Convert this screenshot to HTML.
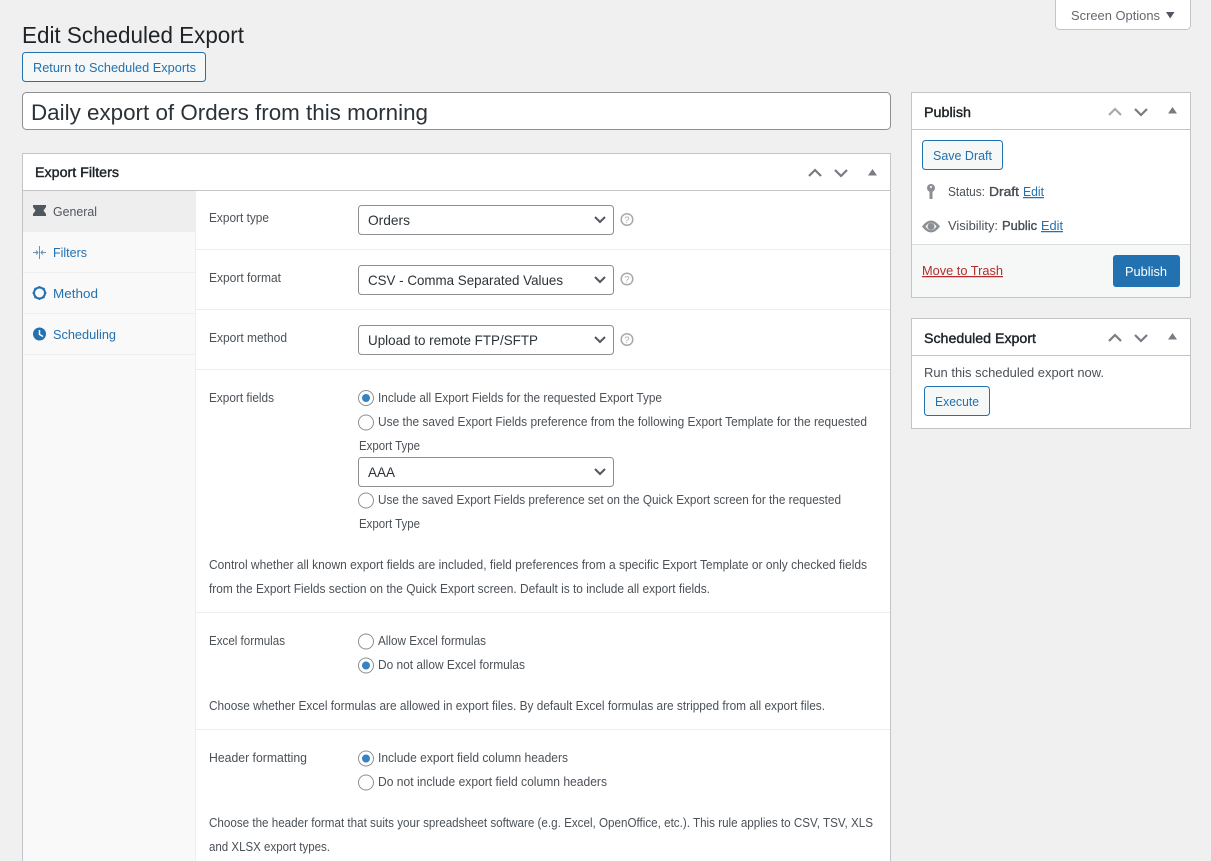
<!DOCTYPE html>
<html><head><meta charset="utf-8"><title>Edit Scheduled Export</title>
<style>
html,body{margin:0;padding:0;background:#f0f0f1;overflow:hidden}
svg{display:block}
text{font-family:"Liberation Sans",sans-serif;font-size:12.5px;fill:#4b5157}
.b{fill:#3c434a;stroke:#3c434a;stroke-width:.35px}
.h{font-size:13.5px;fill:#1d2327;stroke:#1d2327;stroke-width:.4px}
.s{font-size:14px;fill:#2c3338}
.l{fill:#2271b1;font-size:12.5px}
.n{font-size:12.5px;fill:#4b5157}
.ln{stroke:#eee;stroke-width:1}
.box{fill:#fff;stroke:#c3c4c7;stroke-width:1}
.sel{fill:#fff;stroke:#8c8f94;stroke-width:1}
.chev{fill:none;stroke:#50575e;stroke-width:2}
.ctl{fill:none;stroke:#787c82;stroke-width:2.200}
.r{fill:#fff;stroke:#8c8f94;stroke-width:1}
.btn{fill:#f6f7f7;stroke:#2271b1;stroke-width:1}
.hc{fill:none;stroke:#a7aaad;stroke-width:1.500}
.hq{font-size:9.500px;fill:#a7aaad}
</style></head><body>
<svg width="1211" height="861" viewBox="0 0 1211 861" xmlns="http://www.w3.org/2000/svg">
<rect width="1211" height="861" fill="#f0f0f1"/>

<!-- Screen options -->
<path d="M1055.500 -2V25.500a4 4 0 0 0 4 4H1186.500a4 4 0 0 0 4-4V-2Z" class="box"/>
<text x="1071" y="20" textLength="89" lengthAdjust="spacingAndGlyphs" class="n" style="fill:#646970">Screen Options</text>
<path d="M1166 12H1174.500L1170.200 18.500Z" fill="#50575e"/>

<!-- Heading -->
<text x="22" y="43" textLength="222" lengthAdjust="spacingAndGlyphs" style="font-size:23px;fill:#1d2327">Edit Scheduled Export</text>
<rect x="22.500" y="52.500" width="183" height="29" rx="3" class="btn"/>
<text x="33" y="72" textLength="163" lengthAdjust="spacingAndGlyphs" class="l">Return to Scheduled Exports</text>

<!-- Title input -->
<rect x="22.500" y="92.500" width="868" height="37" rx="4" class="sel"/>
<text x="31" y="120" textLength="397" lengthAdjust="spacingAndGlyphs" style="font-size:22.500px;fill:#2c3338">Daily export of Orders from this morning</text>

<!-- Main box -->
<rect x="22.500" y="153.500" width="868" height="720" class="box"/>
<line x1="23" x2="890" y1="190.500" y2="190.500" stroke="#c3c4c7"/>
<text x="35" y="177" textLength="84" lengthAdjust="spacingAndGlyphs" class="h">Export Filters</text>
<path d="M809 176L815 170L821 176" class="ctl"/>
<path d="M835 170L841 176L847 170" class="ctl"/>
<path d="M868 175.500L872.500 169L877 175.500Z" fill="#787c82"/>

<!-- Sidebar -->
<rect x="23" y="191" width="172" height="670" fill="#f9f9f9"/>
<rect x="23" y="191" width="172" height="41" fill="#eeeeee"/>
<line x1="195.500" x2="195.500" y1="191" y2="861" stroke="#eee"/>
<line x1="23" x2="195" y1="272.500" y2="272.500" class="ln"/>
<line x1="23" x2="195" y1="313.500" y2="313.500" class="ln"/>
<line x1="23" x2="195" y1="354.500" y2="354.500" class="ln"/>

<path d="M33 205H46V207L43.500 210.500L46 214V216H33V214L35.500 210.500L33 207Z" fill="#50575e"/>
<text x="53" y="216" textLength="44" lengthAdjust="spacingAndGlyphs" class="n" style="fill:#50575e">General</text>
<path d="M39.500 246V259M33 252.500H38M36 250.500L38 252.500L36 254.500M46 252.500H41M43 250.500L41 252.500L43 254.500" fill="none" stroke="#6d8fb3" stroke-width="1"/>
<text x="53" y="257" textLength="34" lengthAdjust="spacingAndGlyphs" class="l">Filters</text>
<circle cx="39.500" cy="293" r="5.500" fill="none" stroke="#2271b1" stroke-width="2"/>
<path d="M39.500 286V288M39.500 298V300M32.500 293H34.500M44.500 293H46.500M34.500 288L36 289.500M44.500 288L43 289.500M34.500 298L36 296.500M44.500 298L43 296.500" stroke="#2271b1" stroke-width="1.500"/>
<text x="53" y="298" textLength="45" lengthAdjust="spacingAndGlyphs" class="l">Method</text>
<circle cx="39.500" cy="334" r="6.500" fill="#2271b1"/>
<path d="M39.500 330V334.500L43 336.500" fill="none" stroke="#fff" stroke-width="1.500"/>
<text x="53" y="339" textLength="63" lengthAdjust="spacingAndGlyphs" class="l">Scheduling</text>

<!-- Row lines -->
<line x1="196" x2="890" y1="249.500" y2="249.500" class="ln"/>
<line x1="196" x2="890" y1="309.500" y2="309.500" class="ln"/>
<line x1="196" x2="890" y1="369.500" y2="369.500" class="ln"/>
<line x1="196" x2="890" y1="612.500" y2="612.500" class="ln"/>
<line x1="196" x2="890" y1="729.500" y2="729.500" class="ln"/>

<!-- Labels -->
<text x="209" y="222" textLength="60" lengthAdjust="spacingAndGlyphs">Export type</text>
<text x="209" y="282" textLength="72" lengthAdjust="spacingAndGlyphs">Export format</text>
<text x="209" y="342" textLength="78" lengthAdjust="spacingAndGlyphs">Export method</text>
<text x="209" y="402" textLength="65" lengthAdjust="spacingAndGlyphs">Export fields</text>
<text x="209" y="645" textLength="76" lengthAdjust="spacingAndGlyphs">Excel formulas</text>
<text x="209" y="762" textLength="98" lengthAdjust="spacingAndGlyphs">Header formatting</text>

<!-- Selects -->
<rect x="358.500" y="205.500" width="255" height="29" rx="3" class="sel"/>
<text x="368" y="225" textLength="42" lengthAdjust="spacingAndGlyphs" class="s">Orders</text>
<path d="M595 217L600 222L605 217" class="chev"/>
<circle cx="627" cy="219.500" r="5.800" class="hc"/>
<text x="624.300" y="223" class="hq">?</text>

<rect x="358.500" y="265.500" width="255" height="29" rx="3" class="sel"/>
<text x="368" y="285" textLength="195" lengthAdjust="spacingAndGlyphs" class="s">CSV - Comma Separated Values</text>
<path d="M595 277L600 282L605 277" class="chev"/>
<circle cx="627" cy="279" r="5.800" class="hc"/>
<text x="624.300" y="282.500" class="hq">?</text>

<rect x="358.500" y="325.500" width="255" height="29" rx="3" class="sel"/>
<text x="368" y="345" textLength="170" lengthAdjust="spacingAndGlyphs" class="s">Upload to remote FTP/SFTP</text>
<path d="M595 337L600 342L605 337" class="chev"/>
<circle cx="627" cy="339.500" r="5.800" class="hc"/>
<text x="624.300" y="343" class="hq">?</text>

<!-- Export fields -->
<circle cx="366" cy="398" r="7.500" class="r"/><circle cx="366" cy="398" r="4" fill="#3582c4"/>
<text x="378" y="402" textLength="284" lengthAdjust="spacingAndGlyphs">Include all Export Fields for the requested Export Type</text>
<circle cx="366" cy="422.500" r="7.500" class="r"/>
<text x="378" y="426" textLength="489" lengthAdjust="spacingAndGlyphs">Use the saved Export Fields preference from the following Export Template for the requested</text>
<text x="359" y="450" textLength="61" lengthAdjust="spacingAndGlyphs">Export Type</text>
<rect x="358.500" y="457.500" width="255" height="29" rx="3" class="sel"/>
<text x="368" y="477" textLength="27" lengthAdjust="spacingAndGlyphs" class="s">AAA</text>
<path d="M595 469L600 474L605 469" class="chev"/>
<circle cx="366" cy="500.500" r="7.500" class="r"/>
<text x="378" y="504" textLength="463" lengthAdjust="spacingAndGlyphs">Use the saved Export Fields preference set on the Quick Export screen for the requested</text>
<text x="359" y="528" textLength="61" lengthAdjust="spacingAndGlyphs">Export Type</text>
<text x="209" y="569" textLength="658" lengthAdjust="spacingAndGlyphs">Control whether all known export fields are included, field preferences from a specific Export Template or only checked fields</text>
<text x="209" y="593" textLength="501" lengthAdjust="spacingAndGlyphs">from the Export Fields section on the Quick Export screen. Default is to include all export fields.</text>

<!-- Excel -->
<circle cx="366" cy="641.500" r="7.500" class="r"/>
<text x="378" y="645" textLength="108" lengthAdjust="spacingAndGlyphs">Allow Excel formulas</text>
<circle cx="366" cy="665.500" r="7.500" class="r"/><circle cx="366" cy="665.500" r="4" fill="#3582c4"/>
<text x="378" y="669" textLength="147" lengthAdjust="spacingAndGlyphs">Do not allow Excel formulas</text>
<text x="209" y="710" textLength="616" lengthAdjust="spacingAndGlyphs">Choose whether Excel formulas are allowed in export files. By default Excel formulas are stripped from all export files.</text>

<!-- Header -->
<circle cx="366" cy="758.500" r="7.500" class="r"/><circle cx="366" cy="758.500" r="4" fill="#3582c4"/>
<text x="378" y="762" textLength="190" lengthAdjust="spacingAndGlyphs">Include export field column headers</text>
<circle cx="366" cy="782.500" r="7.500" class="r"/>
<text x="378" y="786" textLength="229" lengthAdjust="spacingAndGlyphs">Do not include export field column headers</text>
<text x="209" y="827" textLength="664" lengthAdjust="spacingAndGlyphs">Choose the header format that suits your spreadsheet software (e.g. Excel, OpenOffice, etc.). This rule applies to CSV, TSV, XLS</text>
<text x="209" y="851" textLength="121" lengthAdjust="spacingAndGlyphs">and XLSX export types.</text>

<!-- Publish box -->
<rect x="911.500" y="92.500" width="279" height="205" class="box"/>
<line x1="912" x2="1190" y1="129.500" y2="129.500" stroke="#c3c4c7"/>
<rect x="912" y="245" width="278" height="52" fill="#f6f7f7"/>
<line x1="912" x2="1190" y1="244.500" y2="244.500" stroke="#dcdcde"/>
<text x="924" y="117" textLength="47" lengthAdjust="spacingAndGlyphs" class="h">Publish</text>
<path d="M1109 115L1115 109L1121 115" fill="none" stroke="#a7aaad" stroke-width="2.200"/>
<path d="M1135 109L1141 115L1147 109" class="ctl"/>
<path d="M1168 113.500L1172.500 107L1177 113.500Z" fill="#787c82"/>
<rect x="922.500" y="140.500" width="80" height="29" rx="3" class="btn"/>
<text x="933" y="160" textLength="59" lengthAdjust="spacingAndGlyphs" class="l">Save Draft</text>
<circle cx="931" cy="188" r="4" fill="#8c8f94"/><rect x="929.500" y="190" width="3" height="9" fill="#8c8f94"/><circle cx="931" cy="187" r="1" fill="#fff"/>
<text x="948" y="196" textLength="37" lengthAdjust="spacingAndGlyphs" class="n">Status:</text>
<text x="989" y="196" textLength="30" lengthAdjust="spacingAndGlyphs" class="n b">Draft</text>
<text x="1023" y="196" textLength="21" lengthAdjust="spacingAndGlyphs" class="l" style="text-decoration:underline">Edit</text>
<path d="M922 226.500Q931 214.500 940 226.500Q931 238.500 922 226.500Z" fill="#8c8f94"/><path d="M925.500 226.500Q931 219 936.500 226.500Q931 234 925.500 226.500Z" fill="#fff"/><circle cx="931" cy="226.500" r="3.500" fill="#8c8f94"/>
<text x="948" y="230" textLength="50" lengthAdjust="spacingAndGlyphs" class="n">Visibility:</text>
<text x="1002" y="230" textLength="35" lengthAdjust="spacingAndGlyphs" class="n b">Public</text>
<text x="1041" y="230" textLength="22" lengthAdjust="spacingAndGlyphs" class="l" style="text-decoration:underline">Edit</text>
<text x="922" y="275" textLength="81" lengthAdjust="spacingAndGlyphs" class="n" style="fill:#b32d2e;text-decoration:underline">Move to Trash</text>
<rect x="1113" y="255" width="67" height="32" rx="3" fill="#2271b1"/>
<text x="1125" y="276" textLength="42" lengthAdjust="spacingAndGlyphs" class="n" style="fill:#fff">Publish</text>

<!-- Scheduled Export box -->
<rect x="911.500" y="318.500" width="279" height="110" class="box"/>
<line x1="912" x2="1190" y1="355.500" y2="355.500" stroke="#c3c4c7"/>
<text x="924" y="343" textLength="112" lengthAdjust="spacingAndGlyphs" class="h">Scheduled Export</text>
<path d="M1109 341L1115 335L1121 341" class="ctl"/>
<path d="M1135 335L1141 341L1147 335" class="ctl"/>
<path d="M1168 339.500L1172.500 333L1177 339.500Z" fill="#787c82"/>
<text x="924" y="377" textLength="180" lengthAdjust="spacingAndGlyphs" class="n">Run this scheduled export now.</text>
<rect x="924.500" y="386.500" width="65" height="29" rx="3" class="btn"/>
<text x="935" y="406" textLength="44" lengthAdjust="spacingAndGlyphs" class="l">Execute</text>
</svg>
</body></html>
